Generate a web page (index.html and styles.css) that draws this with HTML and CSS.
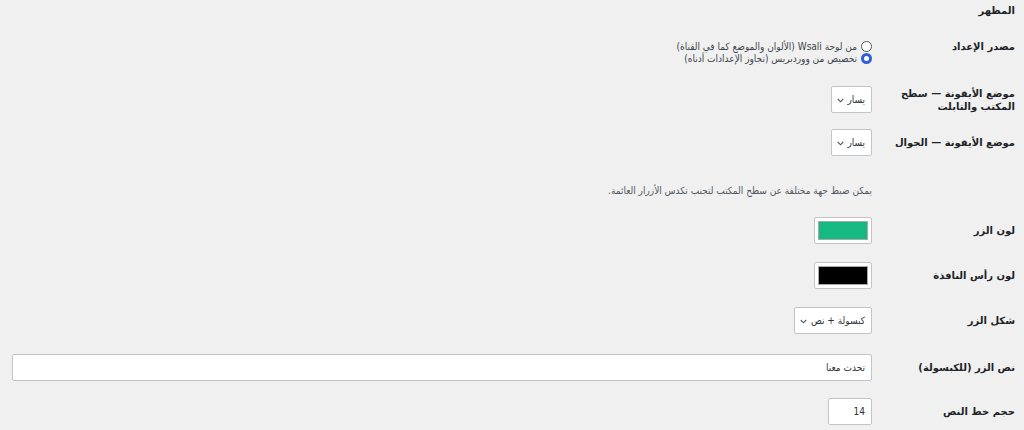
FILE: index.html
```html
<!DOCTYPE html>
<html lang="ar" dir="rtl">
<head>
    <meta charset="UTF-8">
    <meta name="viewport" content="width=device-width, initial-scale=1.0">
    <title>إعدادات Wsali</title>
    <link rel="stylesheet" href="styles.css">
</head>
<body>
    <div class="wrap">
        <h2 class="section-title">المظهر</h2>

        <table class="form-table">
            <tr class="row-source">
                <th>مصدر الإعداد</th>
                <td>
                    <label class="radio-line">
                        <input type="radio" name="source" value="panel">
                        من لوحة Wsali (الألوان والموضع كما في القناة)
                    </label>
                    <label class="radio-line">
                        <input type="radio" name="source" value="wp" checked>
                        تخصيص من ووردبريس (تجاوز الإعدادات أدناه)
                    </label>
                </td>
            </tr>
            <tr class="row-tight">
                <th>موضع الأيقونة — سطح المكتب والتابلت</th>
                <td>
                    <span class="select-wrap">
                        <select>
                            <option>يسار</option>
                            <option>يمين</option>
                        </select>
                        <svg class="chevron" width="7" height="5" viewBox="0 0 7 5"><path d="M0.8 1 L3.5 3.8 L6.2 1" fill="none" stroke="#50575e" stroke-width="1.1"/></svg>
                    </span>
                </td>
            </tr>
            <tr>
                <th>موضع الأيقونة — الجوال</th>
                <td>
                    <span class="select-wrap">
                        <select>
                            <option>يسار</option>
                            <option>يمين</option>
                        </select>
                        <svg class="chevron" width="7" height="5" viewBox="0 0 7 5"><path d="M0.8 1 L3.5 3.8 L6.2 1" fill="none" stroke="#50575e" stroke-width="1.1"/></svg>
                    </span>
                </td>
            </tr>
            <tr class="row-note">
                <th></th>
                <td><p class="description">يمكن ضبط جهة مختلفة عن سطح المكتب لتجنب تكدس الأزرار العائمة.</p></td>
            </tr>
            <tr>
                <th>لون الزر</th>
                <td><span class="color-box"><span class="swatch swatch-green"></span></span></td>
            </tr>
            <tr>
                <th>لون رأس النافذة</th>
                <td><span class="color-box"><span class="swatch swatch-black"></span></span></td>
            </tr>
            <tr>
                <th>شكل الزر</th>
                <td>
                    <span class="select-wrap">
                        <select>
                            <option>كبسولة + نص</option>
                            <option>أيقونة فقط</option>
                        </select>
                        <svg class="chevron" width="7" height="5" viewBox="0 0 7 5"><path d="M0.8 1 L3.5 3.8 L6.2 1" fill="none" stroke="#50575e" stroke-width="1.1"/></svg>
                    </span>
                </td>
            </tr>
            <tr class="row-wide">
                <th>نص الزر (للكبسولة)</th>
                <td><input type="text" class="text-wide" value="تحدث معنا"></td>
            </tr>
            <tr>
                <th>حجم خط النص</th>
                <td><input type="number" class="text-num" value="14"></td>
            </tr>
        </table>
    </div>
</body>
</html>
```

FILE: styles.css
```css
body {
    margin: 0;
    background-color: #f0f0f1;
    color: #1d2327;
    font-family: "DejaVu Sans", sans-serif;
    font-size: 10px;
}

.wrap {
    padding: 0 9px 0 2px;
}

.section-title {
    font-size: 10px;
    font-weight: bold;
    margin: 4px 0 0;
    padding: 0;
    line-height: 14px;
}

.form-table {
    width: 100%;
    border-collapse: collapse;
}

.form-table th {
    width: 133px;
    box-sizing: border-box;
    padding: 9px 0 9px 10px;
    text-align: right;
    vertical-align: middle;
    font-weight: bold;
    line-height: 13px;
}

.form-table td {
    padding: 9px 10px;
    vertical-align: middle;
    line-height: 13px;
}

/* first row: label sits on the first radio line */
.row-source th,
.row-source td {
    vertical-align: top;
    padding-top: 22px;
    padding-bottom: 13px;
}

.row-tight th,
.row-tight td {
    padding-bottom: 7px;
}

.row-wide th,
.row-wide td {
    padding-top: 11px;
    padding-bottom: 8px;
}

.radio-line {
    display: flex;
    align-items: center;
    gap: 4px;
    height: 12px;
    color: #3c434a;
    font-family: "DejaVu Sans Condensed", "DejaVu Sans", sans-serif;
}

.radio-line input {
    appearance: none;
    margin: 0;
    width: 11px;
    height: 11px;
    box-sizing: border-box;
    border: 1px solid #50575e;
    border-radius: 50%;
    background-color: #fff;
}

.radio-line input:checked {
    border: 3px solid #2d5fd6;
}

.row-note td {
    padding-top: 19px;
    padding-bottom: 11px;
}

.description {
    margin: 0;
    color: #50575e;
    font-family: "DejaVu Sans Condensed", "DejaVu Sans", sans-serif;
}

select,
input[type="text"],
input[type="number"] {
    font-family: "DejaVu Sans Condensed", "DejaVu Sans", sans-serif;
    font-size: 10px;
    color: #2c3338;
    background-color: #fff;
    border: 1px solid #c3c4c7;
    border-radius: 2px;
    box-sizing: border-box;
    height: 27px;
    margin: 0;
    outline: none;
}

.select-wrap {
    position: relative;
    display: inline-block;
    vertical-align: top;
}

.select-wrap select {
    appearance: none;
    padding: 0 6px 0 15px;
}

.chevron {
    position: absolute;
    left: 6px;
    top: 12px;
    pointer-events: none;
}

.text-wide {
    width: 100%;
    padding: 0 6px;
}

.text-num {
    width: 44px;
    padding: 0 6px;
    appearance: textfield;
}

.color-box {
    display: block;
    width: 58px;
    height: 27px;
    box-sizing: border-box;
    padding: 3px;
    background-color: #fff;
    border: 1px solid #c3c4c7;
    border-radius: 2px;
}

.swatch {
    display: block;
    height: 100%;
    border: 1px solid #a7aaad;
    box-sizing: border-box;
}

.swatch-green {
    background-color: #15b981;
}

.swatch-black {
    background-color: #000;
}
```
